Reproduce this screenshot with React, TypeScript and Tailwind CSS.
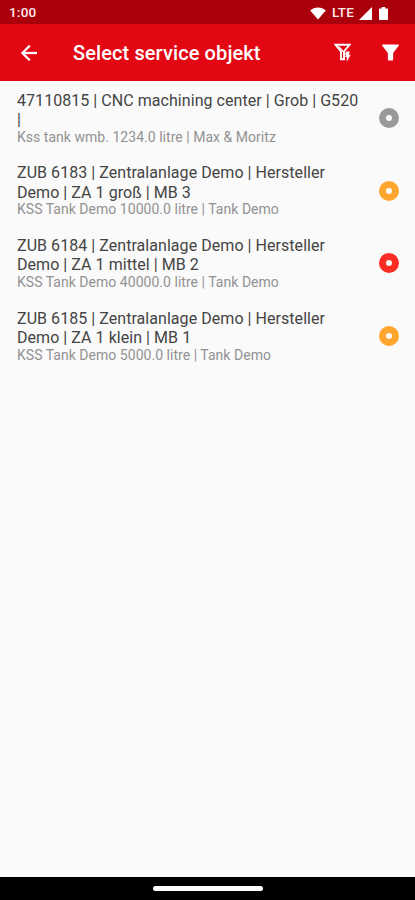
import React from "react";

type ServiceObject = {
  title: string[];
  subtitle: string;
  color: string;
};

const items: ServiceObject[] = [
  {
    title: ["47110815 | CNC machining center | Grob | G520", "|"],
    subtitle: "Kss tank wmb. 1234.0 litre | Max & Moritz",
    color: "text-[#999999]",
  },
  {
    title: ["ZUB 6183 | Zentralanlage Demo | Hersteller", "Demo | ZA 1 groß | MB 3"],
    subtitle: "KSS Tank Demo 10000.0 litre | Tank Demo",
    color: "text-[#ffa62f]",
  },
  {
    title: ["ZUB 6184 | Zentralanlage Demo | Hersteller", "Demo | ZA 1 mittel | MB 2"],
    subtitle: "KSS Tank Demo 40000.0 litre | Tank Demo",
    color: "text-[#fb2c24]",
  },
  {
    title: ["ZUB 6185 | Zentralanlage Demo | Hersteller", "Demo | ZA 1 klein | MB 1"],
    subtitle: "KSS Tank Demo 5000.0 litre | Tank Demo",
    color: "text-[#ffa62f]",
  },
];

function StatusBar() {
  return (
    <div className="flex h-6 shrink-0 items-center bg-[#a9000b] pl-[9px] pr-[27px] pt-[2px] text-[#ffe9e9]">
      <span className="text-[13.500px] font-medium leading-none tracking-[0.2px]">1:00</span>
      <svg className="ml-auto h-[13px] w-[16px]" viewBox="0 0 16 13" fill="#fff">
        <path d="M8 12.5 0.2 3.6C2.3 1.6 5 .5 8 .5s5.700 1.100 7.800 3.100z" />
      </svg>
      <span className="ml-[6px] w-[24px] text-[13.500px] font-medium leading-none tracking-[0.2px]">LTE</span>
      <svg className="ml-[3px] h-[13px] w-[13px]" viewBox="0 0 13 13" fill="#fff">
        <path d="M0 13 13 0v13z" />
      </svg>
      <svg className="ml-[7px] h-[13px] w-[9px]" viewBox="0 0 9 14" preserveAspectRatio="none" fill="#fff">
        <path d="M0 2.500Q0 1.700.8 1.700H2.700V0h3.600v1.700h1.900q.8 0 .8.800v10.700q0 .8-.8.800H.8q-.8 0-.8-.8z" />
      </svg>
    </div>
  );
}

function AppBar() {
  return (
    <header className="flex h-[56.500px] shrink-0 items-center bg-[#e30613] pl-[21px] pr-[16px] pt-[1px] text-white">
      <svg className="h-[16px] w-[16px]" viewBox="4 4 16 16" fill="currentColor" stroke="currentColor" strokeWidth="0.3">
        <path d="M20 11H7.830l5.590-5.590L12 4l-8 8 8 8 1.410-1.410L7.830 13H20v-2z" />
      </svg>
      <h1 className="ml-[36px] text-[20px] font-medium leading-none tracking-[0.1px]">Select service objekt</h1>
      <svg className="ml-auto h-[19px] w-[17px]" viewBox="0 0 17 19" fill="none" stroke="currentColor">
        <path d="M1.500 1.800h14L10 8.500v7.700H7V8.500z" strokeWidth="1.900" />
        <path d="M4.500 3.500l7 7.500" strokeWidth="1.400" />
        <path d="M12.200 8.500h3.600l-1 3.300h1.900L12.800 18.700v-4.600h-1.500z" fill="currentColor" stroke="none" />
      </svg>
      <svg className="ml-[31px] h-[17px] w-[17px]" viewBox="0 0 18 18" fill="currentColor">
        <path d="M.8.500h16.400q1 .3.500 1.300L11.800 9.500v7q0 1-1 1H7.200q-1 0-1-1v-7L.3 1.800Q-.2.800.8.500z" />
      </svg>
    </header>
  );
}

function ServiceRow({ item }: { item: ServiceObject }) {
  return (
    <li className="flex h-[72.700px] items-center pl-[17px] pr-[16px]">
      <div className="flex-1 whitespace-nowrap">
        <div className="text-[16px] leading-[19.400px] tracking-[0.050px] text-[#444]">
          {item.title.map((line) => (
            <p key={line}>{line}</p>
          ))}
        </div>
        <p className="text-[14px] leading-[15.500px] tracking-[0.030px] text-[#929292]">{item.subtitle}</p>
      </div>
      <svg className={`h-[20px] w-[20px] ${item.color}`} viewBox="0 0 20 20" fill="none">
        <circle cx="10" cy="10" r="6.500" stroke="currentColor" strokeWidth="7" />
      </svg>
    </li>
  );
}

export default function App() {
  return (
    <main className="flex h-[900px] w-[415px] flex-col overflow-hidden bg-[#fafafa] font-['Roboto',sans-serif]">
      <StatusBar />
      <AppBar />
      <ul className="flex-1 pt-[1px]">
        {items.map((item) => (
          <ServiceRow key={item.title[0]} item={item} />
        ))}
      </ul>
      <footer className="flex h-[23px] shrink-0 justify-center bg-black pt-[9px]">
        <div className="h-[5px] w-[110px] rounded-full bg-white" />
      </footer>
    </main>
  );
}
